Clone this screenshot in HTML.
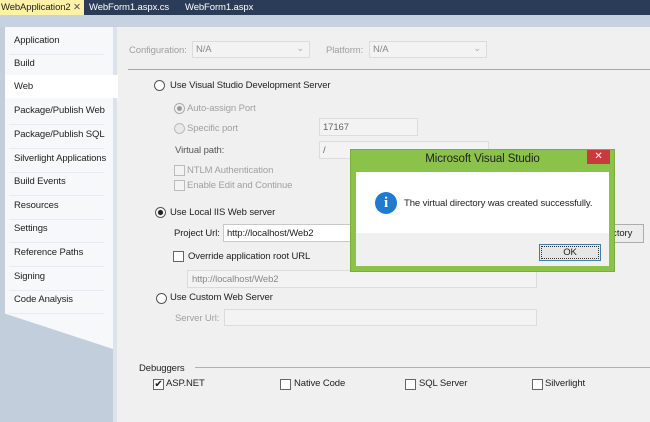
<!DOCTYPE html>
<html><head><style>
*{margin:0;padding:0;box-sizing:border-box}
body{width:650px;height:422px;overflow:hidden;background:#c2cedc;font-family:"Liberation Sans",sans-serif;font-size:9.5px;letter-spacing:-0.1px;color:#1e1e1e;position:relative}
.a{position:absolute;white-space:nowrap}
.g{color:#a0a0a0}
.nav{left:5px;top:27px;width:108px;height:322px;background:#f7f8fa;clip-path:polygon(0 0,100% 0,100% 100%,0 89%);}
.ni{position:absolute;left:9px}
.sep{position:absolute;left:4px;width:95px;height:1px;background:#e8ebef}
.box{position:absolute;background:#f3f3f3;border:1px solid #dcdcdc}
.rad{position:absolute;width:11px;height:11px;border:1px solid #555;border-radius:50%;background:#fff}
.chk{position:absolute;width:11px;height:11px;border:1px solid #666;background:#fff}
</style></head><body>
<div class="a" style="left:0;top:0;width:650px;height:15px;background:#2b3c59"></div>
<div class="a" style="left:0;top:0;width:84px;height:15px;background:#fff1a8;padding:2px 0 0 1px">WebApplication2 <span style="position:absolute;left:73px;color:#555">✕</span></div>
<div class="a" style="left:89px;top:2px;color:#fff">WebForm1.aspx.cs</div>
<div class="a" style="left:185px;top:2px;color:#fff">WebForm1.aspx</div>
<div class="a" style="left:0;top:15px;width:650px;height:12px;background:#c7d2e0"></div>
<div class="a nav">
<div class="ni" style="top:8px">Application</div><div class="sep" style="top:27px"></div>
<div class="ni" style="top:31px">Build</div>
<div class="ni" style="top:78px">Package/Publish Web</div><div class="sep" style="top:97px"></div>
<div class="ni" style="top:102px">Package/Publish SQL</div><div class="sep" style="top:121px"></div>
<div class="ni" style="top:126px">Silverlight Applications</div><div class="sep" style="top:145px"></div>
<div class="ni" style="top:149px">Build Events</div><div class="sep" style="top:168px"></div>
<div class="ni" style="top:173px">Resources</div><div class="sep" style="top:192px"></div>
<div class="ni" style="top:196px">Settings</div><div class="sep" style="top:215px"></div>
<div class="ni" style="top:220px">Reference Paths</div><div class="sep" style="top:239px"></div>
<div class="ni" style="top:244px">Signing</div><div class="sep" style="top:263px"></div>
<div class="ni" style="top:267px">Code Analysis</div><div class="sep" style="top:286px"></div>
</div>
<div class="a" style="left:113px;top:27px;width:4px;height:395px;background:#dde3ea"></div>
<div class="a" style="left:117px;top:27px;width:533px;height:395px;background:#f0f0f0"></div>
<div class="a" style="left:5px;top:75px;width:113px;height:23px;background:#fff;padding:6px 0 0 9px">Web</div>

<div class="a g" style="left:129px;top:45px">Configuration:</div>
<div class="box" style="left:192px;top:41px;width:118px;height:17px"><span class="a" style="left:3px;top:2px;color:#888">N/A</span><span class="a" style="right:5px;top:1px;color:#aaa;font-size:9px">⌄</span></div>
<div class="a g" style="left:326px;top:45px">Platform:</div>
<div class="box" style="left:369px;top:41px;width:118px;height:17px"><span class="a" style="left:3px;top:2px;color:#888">N/A</span><span class="a" style="right:5px;top:1px;color:#aaa;font-size:9px">⌄</span></div>
<div class="a" style="left:128px;top:69px;width:522px;height:1px;background:#a8a8a8"></div>

<div class="rad" style="left:154px;top:80px"></div><div class="a" style="left:170px;top:80px">Use Visual Studio Development Server</div>
<div class="rad" style="left:174px;top:103px;border-color:#aaa;background:radial-gradient(#999 2px,#f3f3f3 3px)"></div><div class="a g" style="left:187px;top:103px">Auto-assign Port</div>
<div class="rad" style="left:174px;top:123px;border-color:#bbb;background:#e9e9e9"></div><div class="a g" style="left:187px;top:123px">Specific port</div>
<div class="box" style="left:319px;top:118px;width:99px;height:18px"><span class="a" style="left:3px;top:3px;color:#666">17167</span></div>
<div class="a" style="left:175px;top:145px;color:#555">Virtual path:</div>
<div class="box" style="left:319px;top:141px;width:170px;height:18px"><span class="a" style="left:3px;top:3px;color:#666">/</span></div>
<div class="chk" style="left:174px;top:165px;border-color:#bbb;background:#f3f3f3"></div><div class="a g" style="left:187px;top:165px">NTLM Authentication</div>
<div class="chk" style="left:174px;top:180px;border-color:#bbb;background:#f3f3f3"></div><div class="a g" style="left:187px;top:180px">Enable Edit and Continue</div>

<div class="rad" style="left:155px;top:207px;background:radial-gradient(#222 2.2px,#fff 3px)"></div><div class="a" style="left:170px;top:207px">Use Local IIS Web server</div>
<div class="a" style="left:174px;top:228px">Project Url:</div>
<div class="a" style="left:223px;top:224px;width:130px;height:18px;background:#fff;border:1px solid #c8c8c8;padding:3px 0 0 3px">http://localhost/Web2</div>
<div class="a" style="left:604px;top:224px;width:40px;height:19px;background:#ececec;border:1px solid #adadad;padding:3px 0 0 2px">ectory</div>
<div class="chk" style="left:173px;top:251px"></div><div class="a" style="left:188px;top:251px">Override application root URL</div>
<div class="box" style="left:187px;top:270px;width:350px;height:18px"><span class="a" style="left:4px;top:3px;color:#888">http://localhost/Web2</span></div>
<div class="rad" style="left:156px;top:293px"></div><div class="a" style="left:170px;top:292px">Use Custom Web Server</div>
<div class="a g" style="left:175px;top:313px">Server Url:</div>
<div class="box" style="left:224px;top:309px;width:313px;height:17px"></div>

<div class="a" style="left:139px;top:363px">Debuggers</div>
<div class="a" style="left:165px;top:367px;width:485px;height:1px;background:#b0b0b0;left:195px;width:455px"></div>
<div class="chk" style="left:153px;top:379px;font-size:10px;line-height:9px;text-align:center">✔</div><div class="a" style="left:166px;top:378px">ASP.NET</div>
<div class="chk" style="left:280px;top:379px"></div><div class="a" style="left:294px;top:378px">Native Code</div>
<div class="chk" style="left:405px;top:379px"></div><div class="a" style="left:419px;top:378px">SQL Server</div>
<div class="chk" style="left:532px;top:379px"></div><div class="a" style="left:545px;top:378px">Silverlight</div>

<div class="a" style="left:350px;top:149px;width:265px;height:123px;background:#8bc34a;border:1px solid #7aad3f"></div>
<div class="a" style="left:350px;top:153px;width:265px;text-align:center;font-size:11.5px;color:#222">Microsoft Visual Studio</div>
<div class="a" style="left:587px;top:150px;width:23px;height:14px;background:#c9393d;color:#fff;text-align:center;font-size:10px;line-height:14px">✕</div>
<div class="a" style="left:356px;top:172px;width:253px;height:94px;background:#f0f0f0"></div>
<div class="a" style="left:356px;top:172px;width:253px;height:61px;background:#fff"></div>
<div class="a" style="left:375px;top:192px;width:22px;height:22px;border-radius:50%;background:#1f7ad0;color:#fff;text-align:center;font:bold 15px/22px 'Liberation Serif',serif">i</div>
<div class="a" style="left:404px;top:198px">The virtual directory was created successfully.</div>
<div class="a" style="left:539px;top:244px;width:62px;height:17px;background:#e6e6e6;border:1px solid #3c7fb1;outline:1px dotted #333;outline-offset:-3px;text-align:center;line-height:15px">OK</div>
</body></html>
